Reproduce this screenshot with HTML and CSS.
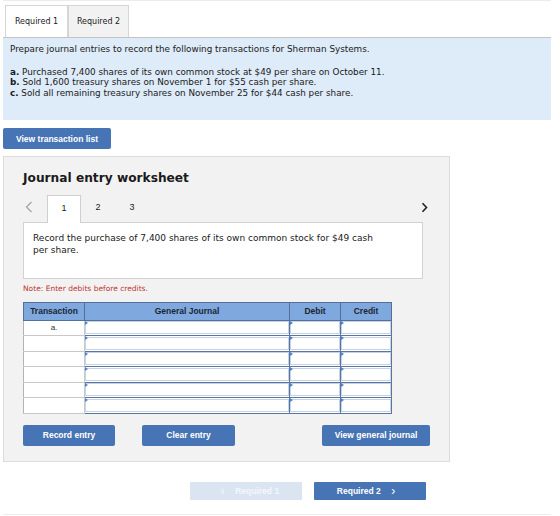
FILE: index.html
```html
<!DOCTYPE html>
<html lang="en">
<head>
    <meta charset="UTF-8">
    <meta name="viewport" content="width=device-width, initial-scale=1.0">
    <title>Journal Entry Worksheet</title>
    <link rel="stylesheet" href="styles.css">
</head>
<body>

    <div class="page">
        <div class="tabs">
            <div class="tab active">Required 1</div>
            <div class="tab">Required 2</div>
        </div>

        <div class="intro">
            <p class="lead">Prepare journal entries to record the following transactions for Sherman Systems.</p>
            <p><b>a.</b> Purchased 7,400 shares of its own common stock at $49 per share on October 11.</p>
            <p><b>b.</b> Sold 1,600 treasury shares on November 1 for $55 cash per share.</p>
            <p><b>c.</b> Sold all remaining treasury shares on November 25 for $44 cash per share.</p>
        </div>

        <button class="btn btn-list">View transaction list</button>

        <div class="worksheet">
            <h2>Journal entry worksheet</h2>

            <div class="steps">
                <span class="arrow prev">
                    <svg width="8" height="12" viewBox="0 0 8 12"><path d="M6.5 1 L1.5 6 L6.5 11" fill="none" stroke="#a6a6a6" stroke-width="1.3"/></svg>
                </span>
                <span class="step current">1</span>
                <span class="step">2</span>
                <span class="step">3</span>
                <span class="arrow next">
                    <svg width="7" height="11" viewBox="0 0 7 11"><path d="M1.5 1.2 L5.5 5.5 L1.5 9.8" fill="none" stroke="#222" stroke-width="1.6"/></svg>
                </span>
            </div>

            <div class="task">
                Record the purchase of 7,400 shares of its own common stock for $49 cash per share.
            </div>

            <p class="note">Note: Enter debits before credits.</p>

            <table class="journal">
                <thead>
                    <tr>
                        <th class="col-tx">Transaction</th>
                        <th class="col-gj">General Journal</th>
                        <th class="col-amt">Debit</th>
                        <th class="col-amt">Credit</th>
                    </tr>
                </thead>
                <tbody id="journalBody"></tbody>
            </table>

            <div class="actions">
                <button class="btn btn-record">Record entry</button>
                <button class="btn btn-clear">Clear entry</button>
                <button class="btn btn-view">View general journal</button>
            </div>
        </div>

        <div class="pager">
            <button class="btn pager-btn disabled"><span class="chev">&lsaquo;</span> Required 1</button>
            <button class="btn pager-btn">Required 2 <span class="chev">&rsaquo;</span></button>
        </div>
    </div>

    <script>
        let rows = ["a.", "", "", "", "", ""];

        document.getElementById("journalBody").innerHTML = rows.map(label =>
            `<tr>
                <td class="tx">${label}</td>
                <td class="input"><div class="field"></div></td>
                <td class="input"><div class="field"></div></td>
                <td class="input"><div class="field"></div></td>
            </tr>`
        ).join('');
    </script>

</body>
</html>
```

FILE: styles.css
```css
body {
    margin: 0;
    font-family: "DejaVu Sans", Verdana, sans-serif;
    color: #1a1a1a;
    background-color: #fff;
}

.page {
    width: 548px;
    margin-left: 3px;
    height: 513px;
    border-top: 1px solid #ececec;
    border-bottom: 1px solid #ececec;
}

/* Top tabs */
.tabs {
    display: flex;
    padding: 4px 0 0 2px;
}
.tab {
    width: 61px;
    height: 32px;
    line-height: 32px;
    text-align: center;
    font-size: 8px;
    border: 1px solid #d6d6d6;
    border-bottom: none;
    background-color: #f2f2f2;
    box-sizing: border-box;
}
.tab.active {
    background-color: #fff;
    width: 63px;
}

/* Instructions */
.intro {
    background-color: #deebf8;
    border-top: 1px solid #c4c4c4;
    height: 83px;
    padding: 6px 7px 0;
    box-sizing: border-box;
    font-size: 8.8px;
}
.intro p {
    margin: 0;
    line-height: 10.5px;
}
.intro .lead {
    margin-bottom: 12px;
}

/* Buttons */
.btn {
    display: block;
    border: none;
    border-radius: 2px;
    background-color: #4774b4;
    color: #fff;
    font-family: "Liberation Sans", Arial, sans-serif;
    font-weight: bold;
    font-size: 8.5px;
    height: 21px;
    padding: 0;
    cursor: pointer;
}
.btn-list {
    width: 108px;
    margin-top: 8px;
}

/* Worksheet panel */
.worksheet {
    margin-top: 7px;
    width: 447px;
    height: 306px;
    box-sizing: border-box;
    background-color: #f2f2f2;
    border: 1px solid #dcdcdc;
    padding: 0 19px;
}
.worksheet h2 {
    margin: 14px 0 0;
    font-size: 12.2px;
    line-height: 15px;
    font-weight: bold;
}

.steps {
    display: flex;
    align-items: flex-end;
    margin-top: 9px;
    height: 27px;
}
.step {
    width: 34px;
    height: 27px;
    line-height: 24px;
    text-align: center;
    font-family: "Liberation Sans", Arial, sans-serif;
    font-size: 9px;
    box-sizing: border-box;
}
.step.current {
    background-color: #fff;
    border: 1px solid #cfcfcf;
    border-bottom: none;
    height: 28px;
    margin-bottom: -1px;
    position: relative;
    z-index: 1;
}
.arrow {
    display: flex;
    align-items: center;
    height: 24px;
    align-self: flex-start;
}
.arrow.prev {
    width: 24px;
    padding-left: 2px;
    box-sizing: border-box;
}
.arrow.next {
    margin-left: auto;
    margin-right: 2px;
}

.task {
    width: 400px;
    height: 57px;
    box-sizing: border-box;
    background-color: #fff;
    border: 1px solid #d2d2d2;
    padding: 9px 36px 0 9px;
    font-size: 9px;
    line-height: 12px;
}

.note {
    margin: 5px 0 0;
    font-size: 7.5px;
    color: #c0352d;
    line-height: 10px;
}

/* Journal table */
.journal {
    margin-top: 8px;
    border-collapse: collapse;
    width: 361px;
    table-layout: fixed;
    font-family: "Liberation Sans", Arial, sans-serif;
}
.journal th {
    background-color: #7ea8de;
    border: 1px solid #54709a;
    height: 16.5px;
    padding: 0;
    font-size: 8.5px;
    color: #1c2533;
}
.col-tx { width: 60px; }
.col-gj { width: 204px; }
.col-amt { width: 50px; }

.journal td {
    height: 14.5px;
    padding: 0;
}
.journal td.tx {
    background-color: #fff;
    border: 1px solid #c8c8c8;
    border-left-color: #b4b4b4;
    text-align: center;
    font-size: 8px;
    color: #333;
}
.journal td.input {
    border: 1.5px solid #5a76a0;
    background-color: #fff;
    position: relative;
}
.field {
    height: 13px;
    border: 1px solid #c5d3e6;
    box-sizing: border-box;
}
.journal td.input::before {
    content: "";
    position: absolute;
    left: 0;
    top: 0;
    border-left: 3px solid #4d82cf;
    border-top: 2px solid transparent;
    border-bottom: 2px solid transparent;
}

.actions {
    display: flex;
    margin-top: 11px;
}
.btn-record { width: 92px; }
.btn-clear { width: 93px; margin-left: 27px; }
.btn-view { width: 108px; margin-left: auto; }

/* Bottom pager */
.pager {
    display: flex;
    margin: 20px 0 0 187px;
    gap: 12px;
}
.pager-btn {
    width: 112px;
    height: 18px;
    border-radius: 1px;
}
.pager-btn.disabled {
    background-color: #dbe5f1;
    color: #f4f7fb;
}
.chev {
    font-size: 12px;
    font-weight: normal;
    margin: 0 8px;
    vertical-align: -1px;
}
```
